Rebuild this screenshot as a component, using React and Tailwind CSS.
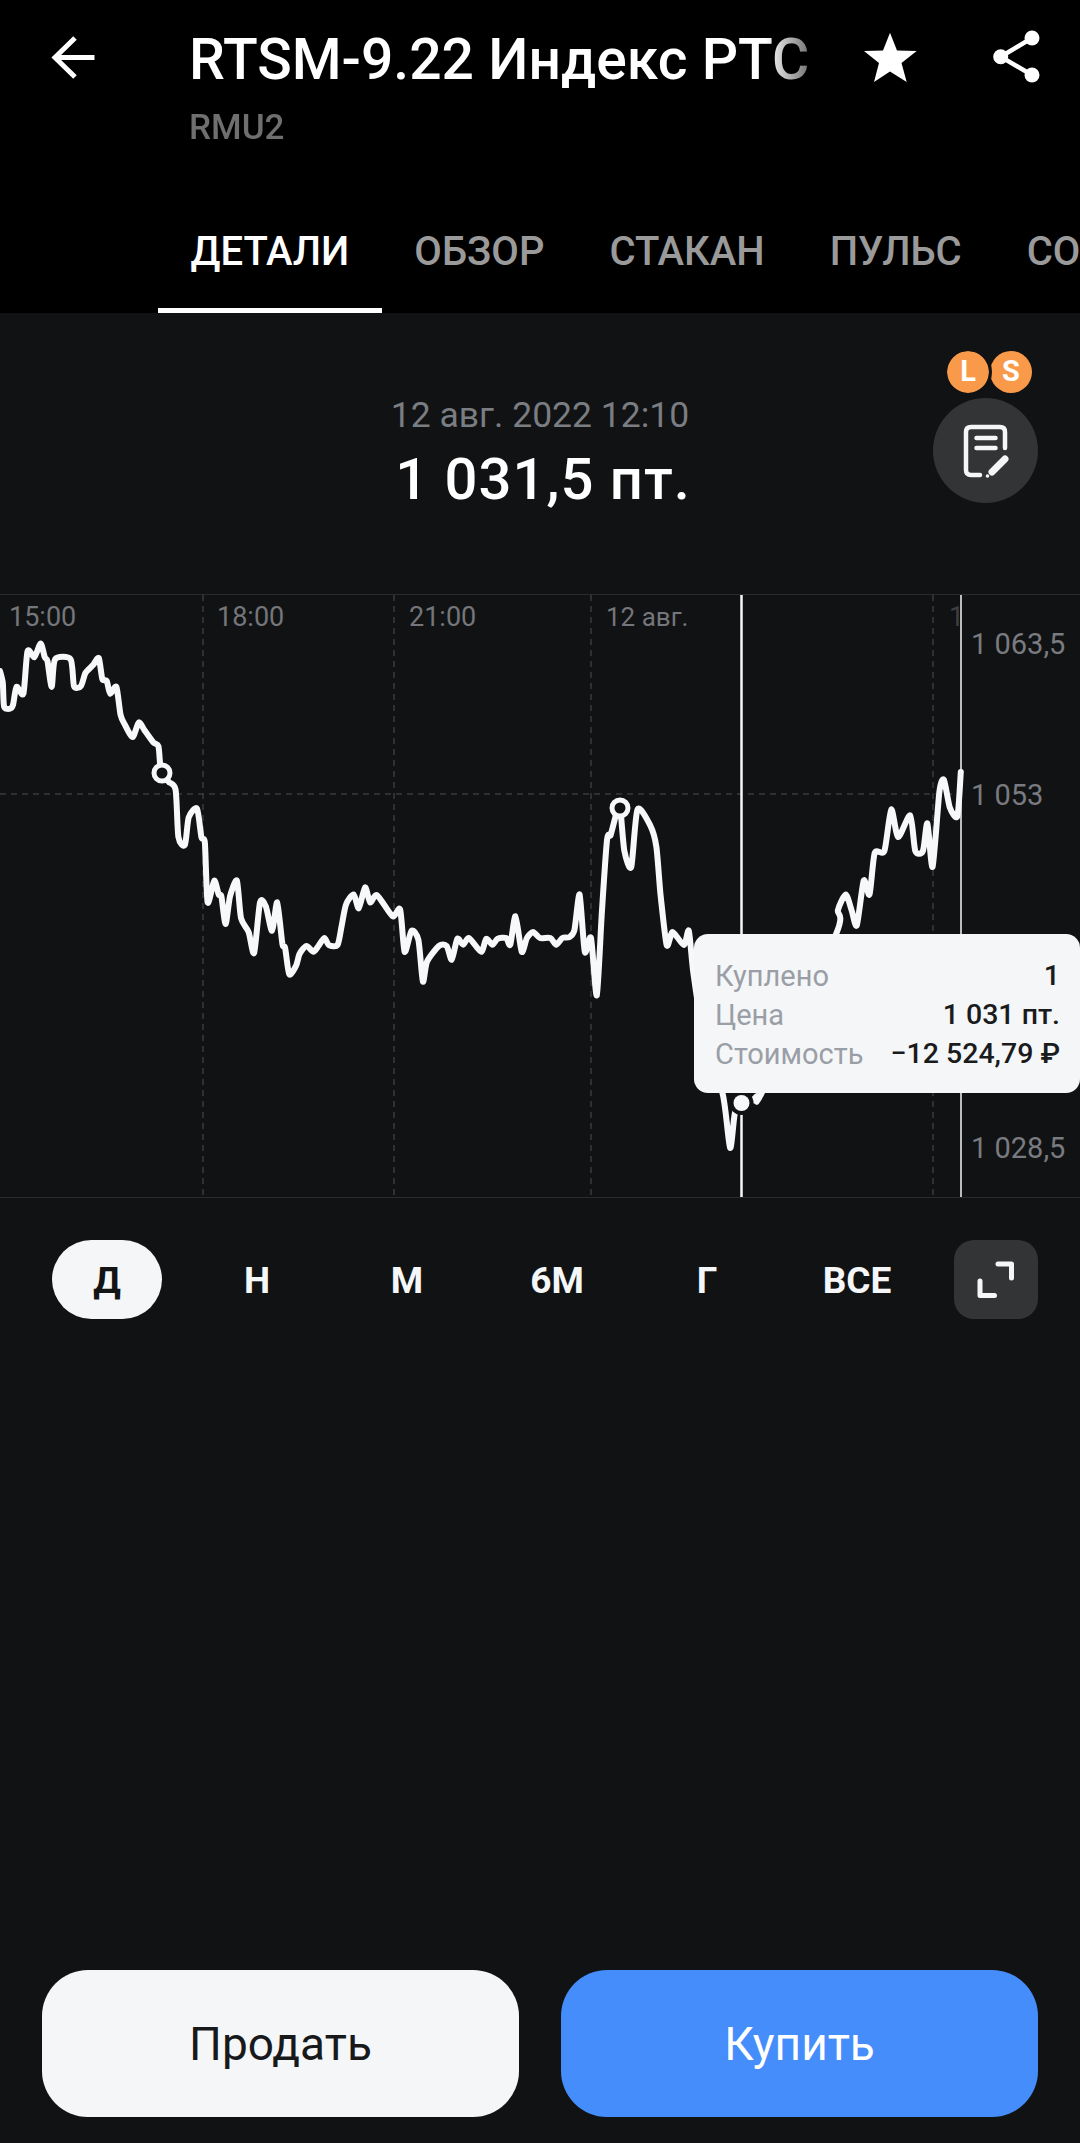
const LEFT = [[0,205],[8,235],[12,295],[30,300],[38,290],[48,245],[68,262],[80,155],[100,170],[118,135],[130,170],[138,180],[150,245],[160,175],[205,175],[215,243],[235,243],[248,210],[270,190],[287,172],[297,225],[310,230],[320,262],[338,245],[350,315],[362,340],[385,372],[403,335],[420,355],[445,385],[460,395],[465,440],[471,462],[490,485],[510,505],[518,625],[537,645],[548,575],[572,553],[585,625],[595,640],[603,790],[622,735],[635,770],[643,775],[655,845],[668,775],[688,735],[700,830],[722,865],[738,918],[755,790],[772,800],[790,862],[805,790],[820,895],[828,905],[840,972],[860,950],[870,920],[890,900],[910,915],[925,900],[942,880],[955,898],[980,898],[992,850],[1005,795],[1027,770],[1042,805],[1060,752],[1075,790],[1095,772],[1140,825],[1162,808],[1175,915],[1195,862],[1215,885],[1228,990],[1240,940],[1275,900],[1297,900],[1312,935],[1328,882],[1345,897],[1362,880],[1397,915],[1412,882],[1430,897],[1445,882],[1470,880],[1482,897],[1497,825],[1515,915],[1530,880],[1548,865],[1568,880]];
const RIGHT = [[30,880],[47,897],[65,880],[85,878],[100,860],[115,770],[130,915],[148,880],[165,1025],[180,810],[195,630],[205,620],[225,555],[233,551],[245,660],[265,700],[283,555],[320,595],[338,650],[350,770],[368,898],[385,865],[418,898],[432,862],[445,965],[470,1100],[531,1277],[552,1411],[566,1323],[586,1297],[610,1295],[630,1280],[645,1270],[860,870],[865,810],[888,770],[905,810],[920,848],[940,735],[957,770],[972,665],[1000,660],[1020,555],[1040,625],[1075,570],[1090,660],[1112,660],[1125,590],[1140,700],[1160,510],[1173,480],[1190,550],[1212,572],[1222,460]];

const pts = [
  ...LEFT.map(([x, y]) => [x / 2.904, 590 + y / 2.529]),
  ...RIGHT.map(([x, y]) => [540 + x / 2.904, 590 + y / 2.529]),
];

function smooth(p) {
  let d = `M${p[0][0].toFixed(1)} ${p[0][1].toFixed(1)}`;
  const k = 0.12;
  for (let i = 0; i < p.length - 1; i++) {
    const a = p[i - 1] || p[i];
    const b = p[i];
    const c = p[i + 1];
    const e = p[i + 2] || c;
    d += `C${(b[0] + (c[0] - a[0]) * k).toFixed(1)} ${(b[1] + (c[1] - a[1]) * k).toFixed(1)} ${(c[0] - (e[0] - b[0]) * k).toFixed(1)} ${(c[1] - (e[1] - b[1]) * k).toFixed(1)} ${c[0].toFixed(1)} ${c[1].toFixed(1)}`;
  }
  return d;
}

function Tab({ children, active }) {
  return (
    <div className={`h-full flex items-center px-[32.5px] border-b-[5px] shrink-0 ${active ? "border-white text-white" : "border-transparent text-[#9a9a9a]"}`}>
      {children}
    </div>
  );
}

function Period({ children, active }) {
  return (
    <div className={`w-[110px] h-[79px] pt-[3px] rounded-full flex items-center justify-center text-[37px] font-bold ${active ? "bg-[#f5f6f8] text-[#131415]" : "text-[#f5f6f8]"}`}>
      {children}
    </div>
  );
}

function TipRow({ label, value }) {
  return (
    <div className="flex justify-between items-center h-[39px]">
      <span className="text-[#9a9ea6] text-[29px]">{label}</span>
      <span className="text-[#1a1b1d] text-[28.5px] font-medium">{value}</span>
    </div>
  );
}

export default function App() {
  return (
    <div className="w-[1080px] h-[2143px] flex flex-col bg-[#111213] overflow-hidden font-['Roboto',sans-serif]">
      <header className="bg-black h-[313px] shrink-0 flex flex-col">
        <div className="h-[196px] flex items-start pt-[27px] pl-[40px] shrink-0">
          <svg width="70" height="70" viewBox="40 27 70 70" className="shrink-0" fill="none" stroke="#fff" strokeWidth="5">
            <path d="M75 38 L55 57.5 L75 77 M55 57.5 H94.5" />
          </svg>
          <div className="ml-[79px] w-[620px] shrink-0 overflow-hidden whitespace-nowrap [mask-image:linear-gradient(to_right,black_93%,rgba(0,0,0,0.45))]">
            <div className="text-[57px] leading-[66px] font-medium text-white">RTSM-9.22 Индекс РТС</div>
            <div className="text-[35px] leading-[40px] font-medium text-[#6f6f6f] mt-[15px]">RMU2</div>
          </div>
          <svg width="60" height="60" viewBox="860 27 60 60" className="ml-[51px] shrink-0" fill="#fff">
            <polygon points="890,32.7 897,50.5 916.7,51 901.5,63 906.7,82 890,71.5 874,82 879,63 864,51 883,50.5" />
          </svg>
          <svg width="60" height="60" viewBox="985 27 60 60" className="ml-[65px] shrink-0" fill="#fff" stroke="#fff">
            <path d="M1032 38 L1000.7 56.7 L1032 75" fill="none" strokeWidth="4.5" />
            <circle cx="1032" cy="38" r="7.5" strokeWidth="0" />
            <circle cx="1000.7" cy="56.7" r="7.5" strokeWidth="0" />
            <circle cx="1032" cy="75" r="7.5" strokeWidth="0" />
          </svg>
        </div>
        <div className="flex-1 flex pl-[158px] text-[40px] font-medium overflow-hidden">
          <Tab active>ДЕТАЛИ</Tab>
          <Tab>ОБЗОР</Tab>
          <Tab>СТАКАН</Tab>
          <Tab>ПУЛЬС</Tab>
          <Tab>СОБЫТИЯ</Tab>
        </div>
      </header>

      <section className="relative h-[281px] shrink-0 flex flex-col items-center pt-[80px]">
        <div className="text-[35.5px] leading-[44px] text-[#7a7d82]">12 авг. 2022 12:10</div>
        <div className="text-[58px] leading-[68px] font-medium text-white mt-[8px] ml-[6px] tracking-[1px]">1 031,5 пт.</div>
        <div className="absolute left-[947px] top-[38px] w-[42px] h-[42px] rounded-full bg-[#f9994a] flex items-center justify-center text-white font-bold text-[29px] z-10 outline-[3px] outline-[#111213]">L</div>
        <div className="absolute left-[990px] top-[38px] w-[42px] h-[42px] rounded-full bg-[#f9994a] flex items-center justify-center text-white font-bold text-[29px]">S</div>
        <div className="absolute left-[933px] top-[85px] w-[105px] h-[105px] rounded-full bg-[#333435] flex items-center justify-center">
          <svg width="60" height="60" viewBox="957 420 60 60" fill="none" stroke="#f5f6f8" strokeLinecap="round">
            <path d="M1006 447 V431 Q1006 426 1001 426 H972 Q967 426 967 431 V469 Q967 474 972 474 H981" strokeWidth="4.5" />
            <path d="M977.5 437 H996.5 M977.5 447 H996.5" strokeWidth="4.5" />
            <path d="M1006 458 L993 471" strokeWidth="7" />
            <circle cx="988.5" cy="475" r="1.8" fill="#f5f6f8" stroke="none" />
          </svg>
        </div>
      </section>

      <section className="relative h-[604px] shrink-0 border-y border-[#2a2b2c] text-[27px] text-[#74767b]">
        <svg className="absolute left-0 top-0" width="1080" height="602" viewBox="0 595 1080 602" fill="none">
          <g stroke="#3a3b3d" strokeWidth="1.5" strokeDasharray="6 5">
            <path d="M203 595 V1197 M394 595 V1197 M591 595 V1197 M933 595 V1197" />
            <path d="M0 794 H961" />
          </g>
          <path d={smooth(pts)} stroke="#f7f8fa" strokeWidth="6" strokeLinejoin="round" strokeLinecap="round" />
          <path d="M741.5 595 V1197" stroke="#f5f6f8" strokeWidth="2.5" />
          <path d="M961 595 V1197" stroke="#f5f6f8" strokeWidth="1.5" />
          <circle cx="162" cy="773" r="8" fill="#111213" stroke="#f7f8fa" strokeWidth="5" />
          <circle cx="620" cy="808" r="8" fill="#111213" stroke="#f7f8fa" strokeWidth="5" />
          <circle cx="741.5" cy="1103" r="12" fill="#111213" />
          <circle cx="741.5" cy="1103" r="8" fill="#f7f8fa" />
        </svg>
        <span className="absolute left-[9px] top-[6px] leading-[32px]">15:00</span>
        <span className="absolute left-[217px] top-[6px] leading-[32px]">18:00</span>
        <span className="absolute left-[409px] top-[6px] leading-[32px]">21:00</span>
        <span className="absolute left-[606px] top-[6px] leading-[32px] text-[26px]">12 авг.</span>
        <span className="absolute left-[949px] top-[6px] leading-[32px] text-[#3e3f42]">1</span>
        <span className="absolute left-[971px] top-[32px] leading-[34px] text-[29px] text-[#797b80]">1 063,5</span>
        <span className="absolute left-[971px] top-[183px] leading-[34px] text-[29px] text-[#797b80]">1 053</span>
        <span className="absolute left-[971px] top-[536px] leading-[34px] text-[29px] text-[#797b80]">1 028,5</span>
        <div className="absolute left-[694px] top-[339px] w-[386px] h-[159px] rounded-[14px] bg-[#f5f6f8] pl-[21px] pr-[20px] pt-[23px]">
          <TipRow label="Куплено" value="1" />
          <TipRow label="Цена" value="1 031 пт." />
          <TipRow label="Стоимость" value="−12 524,79 ₽" />
        </div>
      </section>

      <div className="flex items-center gap-[40px] pl-[52px] pt-[42px] shrink-0">
        <Period active>Д</Period>
        <Period>Н</Period>
        <Period>М</Period>
        <Period>6М</Period>
        <Period>Г</Period>
        <Period>ВСЕ</Period>
        <div className="w-[84px] h-[79px] ml-[2px] rounded-[20px] bg-[#333435] flex items-center justify-center">
          <svg width="50" height="50" viewBox="971 1255 50 50" fill="none" stroke="#f5f6f8" strokeWidth="5" strokeLinecap="round" strokeLinejoin="round">
            <path d="M998 1264 H1011.5 V1278 M980 1281 V1295.5 H994.5" />
          </svg>
        </div>
      </div>

      <div className="flex-1" />

      <div className="flex gap-[42px] px-[42px] pb-[26px] shrink-0">
        <button className="flex-1 h-[147px] pt-[2px] rounded-[46px] bg-[#f5f6f8] text-[#18191b] text-[46px]">Продать</button>
        <button className="flex-1 h-[147px] pt-[2px] rounded-[46px] bg-[#448dfa] text-white text-[46px]">Купить</button>
      </div>
    </div>
  );
}
